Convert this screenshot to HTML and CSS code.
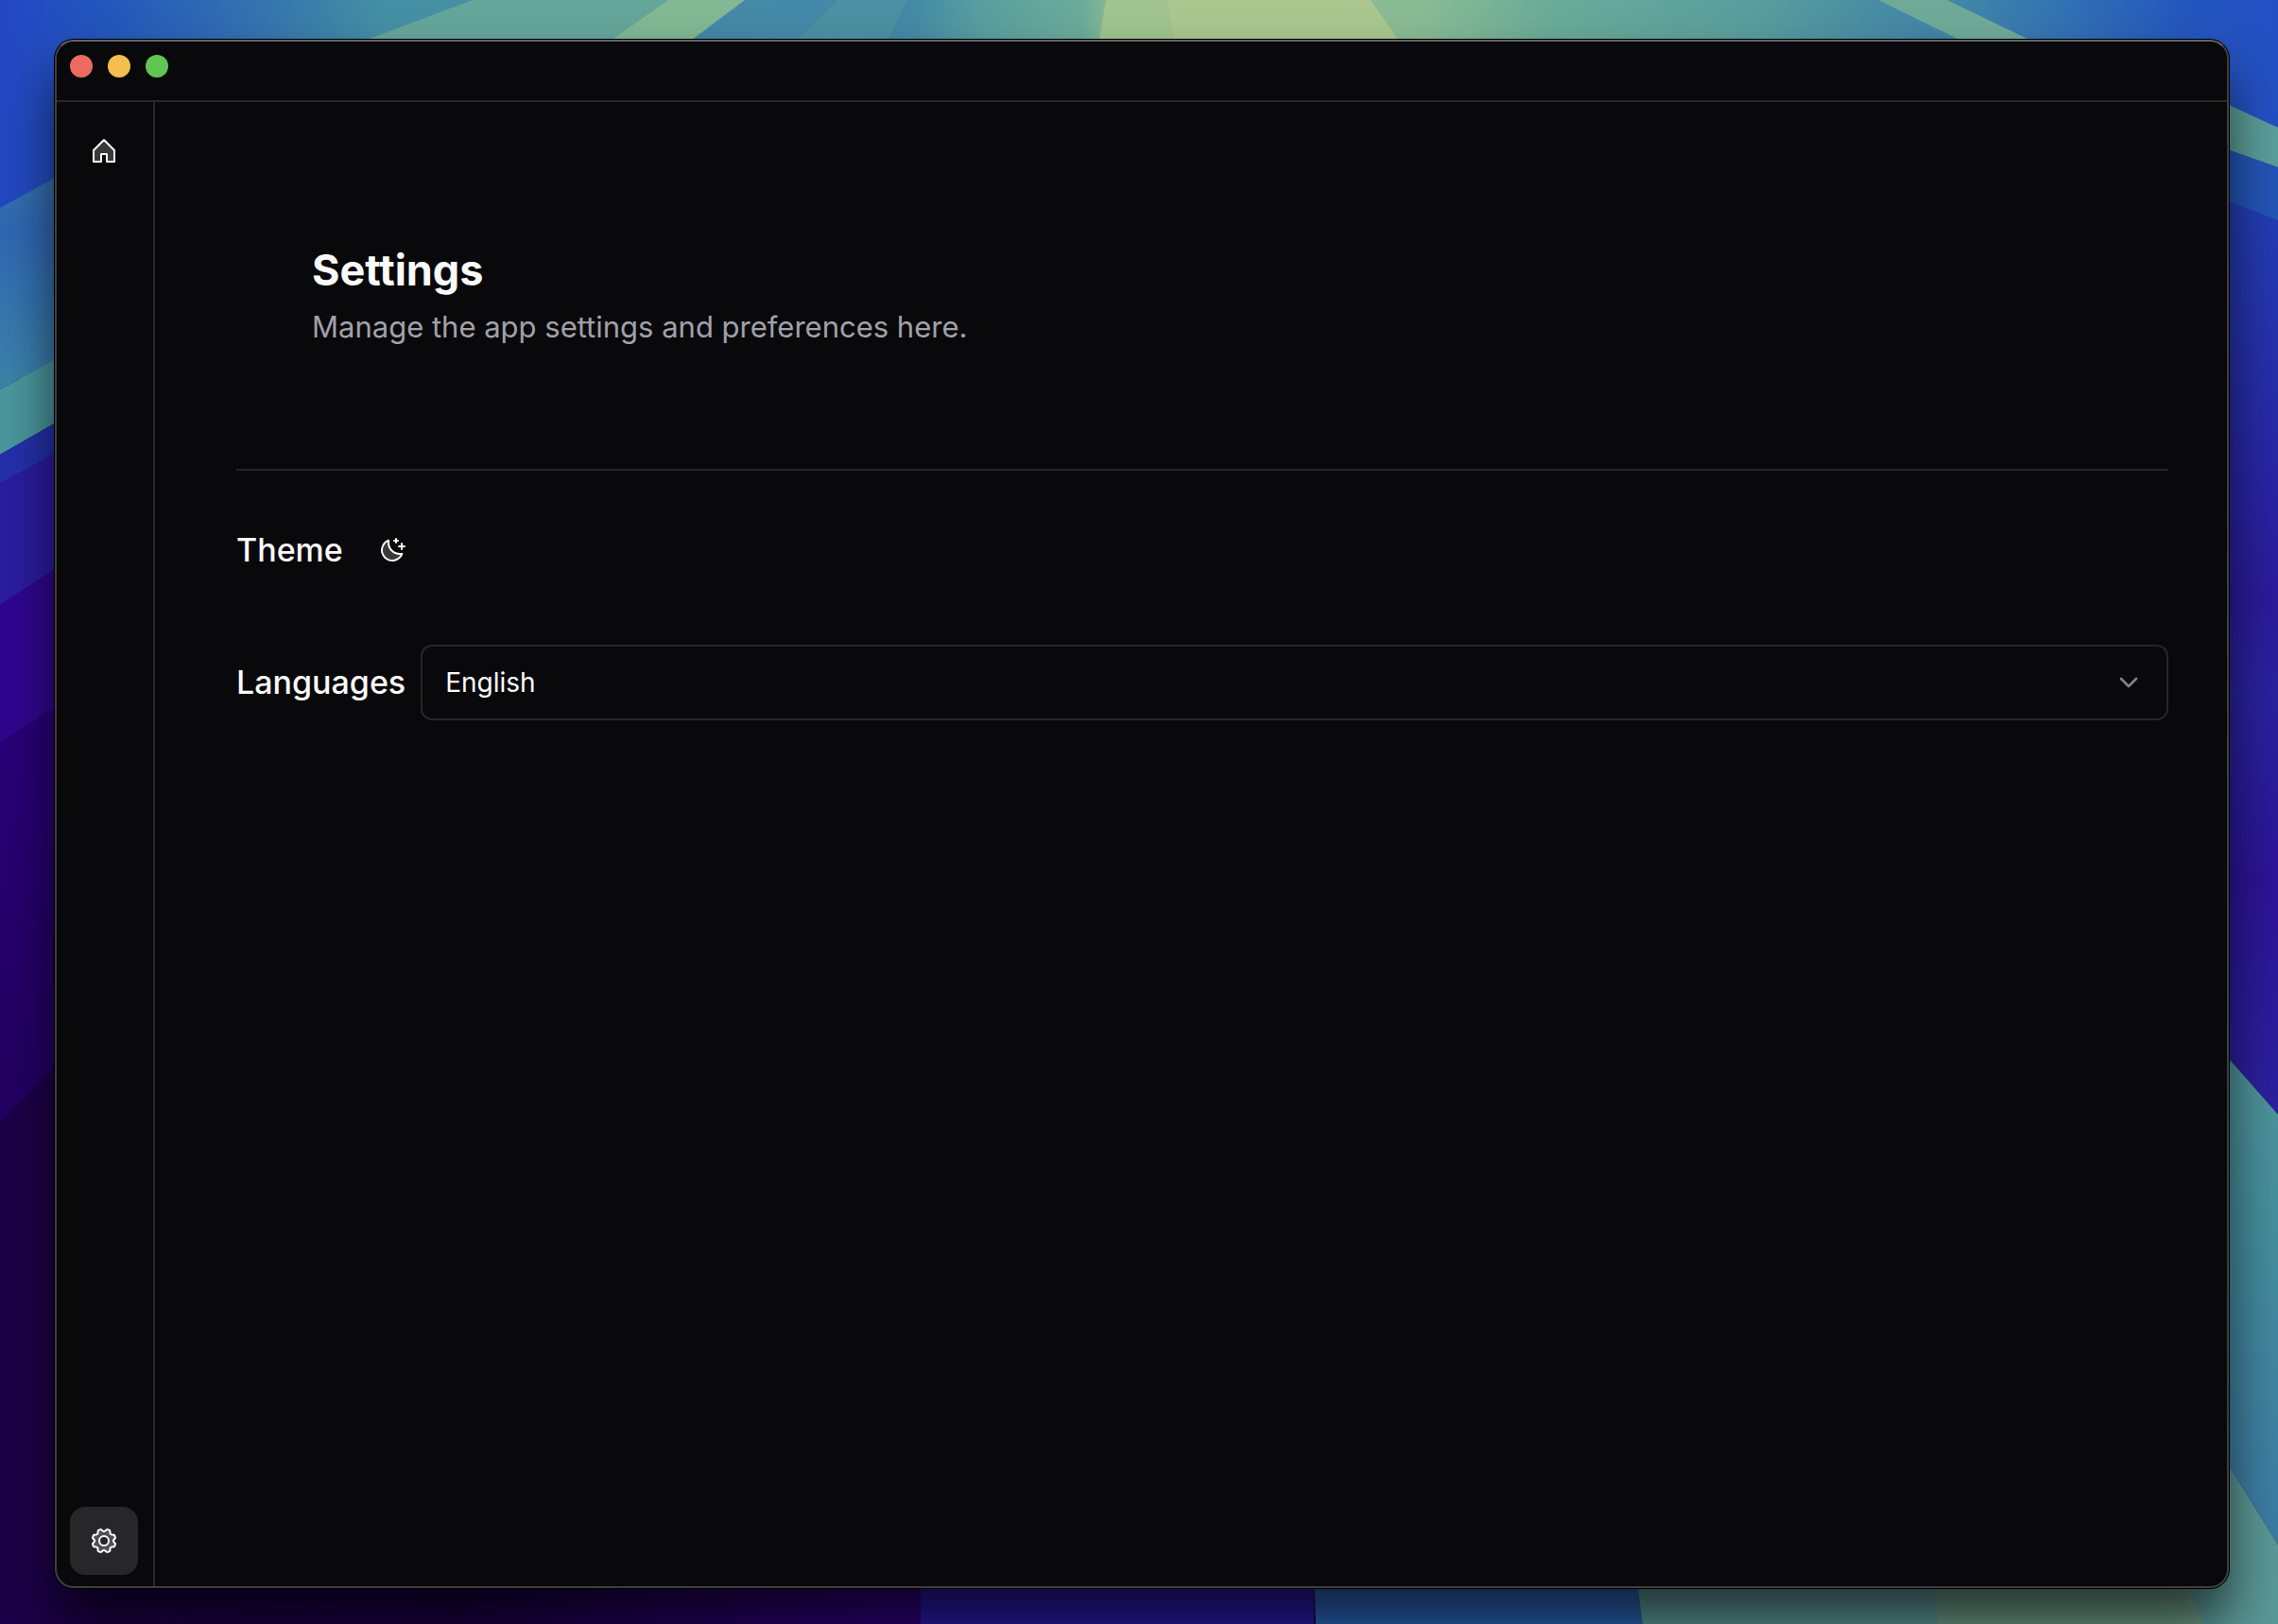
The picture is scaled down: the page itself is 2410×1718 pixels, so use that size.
FILE: index.html
```html
<!DOCTYPE html>
<html lang="en">
<head>
<meta charset="utf-8">
<meta name="viewport" content="width=device-width, initial-scale=1">
<title>Settings</title>
<link rel="stylesheet" href="styles.css">
</head>
<body>
<svg class="wallpaper" viewBox="0 0 2410 1718" preserveAspectRatio="none" aria-hidden="true">
  <defs>
    <linearGradient id="sky"><stop offset="0" stop-color="#2346c4"/><stop offset=".05" stop-color="#2458bc"/><stop offset=".12" stop-color="#3676ae"/><stop offset=".17" stop-color="#4590a4"/><stop offset=".85" stop-color="#458aa4"/><stop offset=".9" stop-color="#3474b2"/><stop offset=".96" stop-color="#2456be"/><stop offset="1" stop-color="#2450c4"/></linearGradient>
    <linearGradient id="rays" gradientUnits="userSpaceOnUse" x1="780" y1="0" x2="2085" y2="0"><stop offset="0" stop-color="#4588a8"/><stop offset=".14" stop-color="#4389a6"/><stop offset=".2" stop-color="#5a9f9f"/><stop offset=".28" stop-color="#6cab9a"/><stop offset=".3" stop-color="#84b894"/><stop offset=".35" stop-color="#96c08f"/><stop offset=".56" stop-color="#88ba94"/><stop offset=".66" stop-color="#6aab98"/><stop offset=".82" stop-color="#5a9e9d"/><stop offset="1" stop-color="#3c7fa9"/></linearGradient>
    <linearGradient id="steel" x2="0" y2="1"><stop offset="0" stop-color="#3779ad"/><stop offset=".35" stop-color="#3068b4"/><stop offset="1" stop-color="#3c84aa"/></linearGradient>
    <linearGradient id="violet" x2="0" y2="1"><stop offset="0" stop-color="#2a007c"/><stop offset="1" stop-color="#220060"/></linearGradient>
    <linearGradient id="indigo" x2="0" y2="1"><stop offset="0" stop-color="#2240b8"/><stop offset=".45" stop-color="#2c1a9c"/><stop offset=".55" stop-color="#2a229e"/><stop offset=".75" stop-color="#2c1498"/><stop offset="1" stop-color="#2c20a0"/></linearGradient>
    <linearGradient id="lagoon" x2="0" y2="1"><stop offset="0" stop-color="#52989c"/><stop offset=".4" stop-color="#478f9e"/><stop offset="1" stop-color="#3b7ca6"/></linearGradient>
    <linearGradient id="night"><stop offset="0" stop-color="#1c0048"/><stop offset=".5" stop-color="#180040"/><stop offset="1" stop-color="#2c0078"/></linearGradient>
  </defs>
  <path fill="url(#sky)" d="M0 0H2410V400H0Z"/>
  <path fill="#65a69a" d="M500 0H780L720 60H340Z"/>
  <path fill="#82b893" d="M707 0H788L720 60H622Z"/>
  <path fill="url(#rays)" d="M788 0H1987L2100 60H708Z"/>
  <path fill="#5496a2" opacity=".6" d="M887 0H960L930 60H826Z"/>
  <path fill="#a0c38f" d="M1170 0H1450L1492 60H1160Z"/>
  <path fill="#b3cb8f" opacity=".5" d="M1235 0H1450L1492 60H1245Z"/>
  <path fill="#6faa99" d="M1987 0H2060L2184 60H2110Z"/>
  <path fill="url(#steel)" d="M0 220L120 154V346L0 412Z"/>
  <path fill="#4b979e" d="M0 412L120 346V412L0 481Z"/>
  <path fill="#2430aa" d="M0 481L120 412V446L0 512Z"/>
  <path fill="#2c1ca0" d="M0 512L120 446V562L0 640Z"/>
  <path fill="#300690" d="M0 640L120 562V711L0 785Z"/>
  <path fill="url(#violet)" d="M0 785L120 711V1067L0 1187Z"/>
  <path fill="url(#night)" d="M0 1187L120 1067 974 1200V1718H0Z"/>
  <path fill="#5c9f9b" d="M2300 85L2358 111 2410 135V177L2300 138Z"/>
  <path fill="#2456b8" d="M2300 138L2410 177V233L2300 190Z"/>
  <path fill="url(#indigo)" d="M2300 190L2410 233V1179L2300 1054Z"/>
  <path fill="url(#lagoon)" d="M2300 1054L2410 1179V1634L2300 1456Z"/>
  <path fill="#5a9896" d="M1700 1456H2300L2410 1634V1718H1700Z"/>
  <path fill="#6d9a86" d="M2040 1600H2290L2330 1718H2050Z"/>
  <path fill="#2a17a0" d="M974 1400H1390V1718H974Z"/>
  <path fill="#2a62b2" d="M1388 1600H1722L1738 1718H1392Z"/>
</svg>
<div class="window">
  <header class="titlebar">
    <button class="light light-close" type="button" aria-label="Close"></button>
    <button class="light light-minimize" type="button" aria-label="Minimize"></button>
    <button class="light light-zoom" type="button" aria-label="Zoom"></button>
  </header>
  <div class="body">
    <nav class="sidebar" aria-label="Main">
      <a class="icon-button" href="#home" aria-label="Home">
        <svg class="icon" viewBox="0 0 256 256" fill="currentColor"><path opacity=".2" d="M104 216V152h48v64h64V120L128 32 40 120v96Z"/><path fill="none" stroke="currentColor" stroke-width="16" stroke-linejoin="round" d="M104 216V152h48v64h64V120L128 32 40 120v96Z"/></svg>
      </a>
      <a class="icon-button icon-button-active" href="#settings" aria-label="Settings" aria-current="page">
        <svg class="icon" viewBox="0 0 256 256" fill="currentColor"><path opacity=".2" fill-rule="evenodd" d="M207.86 123.18l16.78-21a99.14 99.14 0 0 0-10.07-24.29l-26.7-3a81 81 0 0 0-6.81-6.81l-3-26.71a99.43 99.43 0 0 0-24.3-10l-21 16.77a81.59 81.59 0 0 0-9.64 0l-21-16.78a99.14 99.14 0 0 0-24.21 10.07l-3 26.7a81 81 0 0 0-6.81 6.81l-26.71 3a99.43 99.43 0 0 0-10 24.3l16.77 21a81.59 81.59 0 0 0 0 9.64l-16.78 21a99.14 99.14 0 0 0 10.07 24.29l26.7 3a81 81 0 0 0 6.81 6.81l3 26.71a99.43 99.43 0 0 0 24.3 10l21-16.77a81.59 81.59 0 0 0 9.64 0l21 16.78a99.14 99.14 0 0 0 24.29-10.07l3-26.7a81 81 0 0 0 6.81-6.81l26.71-3a99.43 99.43 0 0 0 10-24.3l-16.77-21a81.59 81.59 0 0 0-.08-9.64ZM128 168a40 40 0 1 1 40-40 40 40 0 0 1-40 40Z"/><path fill-rule="evenodd" d="M128,80a48,48,0,1,0,48,48A48.05,48.05,0,0,0,128,80Zm0,80a32,32,0,1,1,32-32A32,32,0,0,1,128,160Zm88-29.84q.06-2.16,0-4.32l14.92-18.64a8,8,0,0,0,1.48-7.06,107.21,107.21,0,0,0-10.88-26.25,8,8,0,0,0-6-3.93l-23.72-2.64q-1.48-1.56-3-3L186,40.54a8,8,0,0,0-3.94-6,107.71,107.71,0,0,0-26.25-10.87,8,8,0,0,0-7.06,1.49L130.16,40Q128,40,125.84,40L107.2,25.11a8,8,0,0,0-7.06-1.48A107.6,107.6,0,0,0,73.89,34.51a8,8,0,0,0-3.93,6L67.32,64.27q-1.56,1.49-3,3L40.54,70a8,8,0,0,0-6,3.94,107.71,107.71,0,0,0-10.87,26.25,8,8,0,0,0,1.49,7.06L40,125.84Q40,128,40,130.16L25.11,148.8a8,8,0,0,0-1.48,7.06,107.21,107.21,0,0,0,10.88,26.25,8,8,0,0,0,6,3.93l23.72,2.64q1.49,1.56,3,3L70,215.46a8,8,0,0,0,3.94,6,107.71,107.71,0,0,0,26.25,10.87,8,8,0,0,0,7.06-1.49L125.84,216q2.16.06,4.32,0l18.64,14.92a8,8,0,0,0,7.06,1.48,107.21,107.21,0,0,0,26.25-10.88,8,8,0,0,0,3.93-6l2.64-23.72q1.56-1.48,3-3L215.46,186a8,8,0,0,0,6-3.94,107.71,107.71,0,0,0,10.87-26.25,8,8,0,0,0-1.49-7.06Zm-16.1-6.5a73.93,73.93,0,0,1,0,8.68,8,8,0,0,0,1.74,5.48l14.19,17.73a91.57,91.57,0,0,1-6.23,15L187,173.11a8,8,0,0,0-5.1,2.64,74.11,74.11,0,0,1-6.14,6.14,8,8,0,0,0-2.64,5.1l-2.51,22.58a91.32,91.32,0,0,1-15,6.23l-17.74-14.19a8,8,0,0,0-5-1.75h-.48a73.93,73.93,0,0,1-8.68,0,8,8,0,0,0-5.48,1.74L100.45,215.8a91.57,91.57,0,0,1-15-6.23L82.89,187a8,8,0,0,0-2.64-5.1,74.11,74.11,0,0,1-6.14-6.14,8,8,0,0,0-5.1-2.64L46.43,170.6a91.32,91.32,0,0,1-6.23-15l14.19-17.74a8,8,0,0,0,1.74-5.48,73.93,73.93,0,0,1,0-8.68,8,8,0,0,0-1.74-5.48L40.2,100.45a91.57,91.57,0,0,1,6.23-15L69,82.89a8,8,0,0,0,5.1-2.64,74.11,74.11,0,0,1,6.14-6.14A8,8,0,0,0,82.89,69L85.4,46.43a91.32,91.32,0,0,1,15-6.23l17.74,14.19a8,8,0,0,0,5.48,1.74,73.93,73.93,0,0,1,8.68,0,8,8,0,0,0,5.48-1.74L155.55,40.2a91.57,91.57,0,0,1,15,6.23L173.11,69a8,8,0,0,0,2.64,5.1,74.11,74.11,0,0,1,6.14,6.14,8,8,0,0,0,5.1,2.64l22.58,2.51a91.32,91.32,0,0,1,6.23,15l-14.19,17.74A8,8,0,0,0,199.87,123.66Z"/></svg>
      </a>
    </nav>
    <main class="content">
      <section class="intro">
        <h1 class="title">Settings</h1>
        <p class="subtitle">Manage the app settings and preferences here.</p>
      </section>
      <hr class="divider">
      <div class="rows">
        <div class="row">
          <h2 class="label" id="theme-label">Theme</h2>
          <button class="icon-button" type="button" aria-labelledby="theme-label">
            <svg class="icon" viewBox="0 0 256 256" fill="currentColor"><path opacity=".2" d="M210.69 158.18A96 96 0 0 1 97.82 45.31 88 88 0 1 0 210.69 158.18Z"/><path d="M240,96a8,8,0,0,1-8,8H216v16a8,8,0,0,1-16,0V104H184a8,8,0,0,1,0-16h16V72a8,8,0,0,1,16,0V88h16A8,8,0,0,1,240,96ZM144,56h8v8a8,8,0,0,0,16,0V56h8a8,8,0,0,0,0-16h-8V32a8,8,0,0,0-16,0v8h-8a8,8,0,0,0,0,16Zm72.77,97a8,8,0,0,1,1.43,8A96,96,0,1,1,95.07,37.8a8,8,0,0,1,10.6,9.06A88.07,88.07,0,0,0,209.14,150.35,8,8,0,0,1,216.77,153Zm-19.39,14.88c-1.79.09-3.59.14-5.38.14A104.11,104.11,0,0,1,88,64c0-1.79,0-3.59.14-5.38A80,80,0,1,0,197.38,167.83Z"/></svg>
          </button>
        </div>
        <div class="row">
          <label class="label" for="language">Languages</label>
          <div class="select">
            <select class="select-input" id="language"><option>English</option></select>
            <svg class="select-arrow" viewBox="0 0 24 24" aria-hidden="true"><path d="m6 9 6 6 6-6"/></svg>
          </div>
        </div>
      </div>
    </main>
  </div>
</div>
</body>
</html>
```
FILE: styles.css
```css
* {
  box-sizing: border-box;
}

body {
  display: flex;
  min-height: 100vh;
  margin: 0;
  padding: 42px 52px 38px 58px;
  background: #1c0048;
  color: #fafafa;
  font-family: Inter, "Liberation Sans", sans-serif;
}

h1, h2, p {
  margin: 0;
}

.wallpaper {
  position: absolute;
  inset: 0;
  z-index: -1;
  width: 100%;
  height: 100%;
}

.window {
  display: flex;
  flex: 1;
  flex-direction: column;
  min-width: 0;
  overflow: hidden;
  border: 2px solid #3f3f41;
  border-top-color: #626366;
  border-radius: 20px;
  background: #09090b;
  box-shadow: 0 0 0 1px #000, 0 36px 56px rgba(0, 0, 0, .65);
}

.titlebar {
  display: flex;
  gap: 16px;
  height: 64px;
  padding: 14px;
  border-bottom: 2px solid #27272a;
}

.light {
  width: 24px;
  height: 24px;
  padding: 0;
  border: 0;
  border-radius: 50%;
}

.light-close {
  background: #ed6a5e;
}

.light-minimize {
  background: #f5bf4f;
}

.light-zoom {
  background: #61c554;
}

.body {
  display: flex;
  flex: 1;
}

.sidebar {
  display: flex;
  flex-direction: column;
  justify-content: space-between;
  padding: 16px 16px 12px 14px;
  border-right: 2px solid #27272a;
}

.icon-button {
  display: grid;
  place-items: center;
  width: 72px;
  height: 72px;
  padding: 0;
  border: 0;
  border-radius: 16px;
  background: none;
  color: #fafafa;
}

.icon-button-active {
  background: #27272a;
}

.icon {
  width: 32px;
  height: 32px;
}

.content {
  flex: 1;
  min-width: 0;
  padding: 70px 62px 70px 86px;
}

.intro {
  display: grid;
  gap: 8px;
  padding: 80px;
}

.title {
  font-size: 45px;
  font-weight: 700;
  line-height: 56px;
}

.subtitle {
  color: #a1a1aa;
  font-size: 31px;
  line-height: 48px;
}

.divider {
  height: 2px;
  margin: 46px 0 48px;
  border: 0;
  background: #27272a;
}

.rows {
  display: grid;
  gap: 64px;
}

.row {
  display: flex;
  align-items: center;
  gap: 16px;
}

.label {
  font-size: 34px;
  font-weight: 500;
  line-height: 56px;
}

.select {
  display: grid;
  flex: 1;
  align-items: center;
}

.select-input {
  grid-area: 1 / 1;
  width: 100%;
  height: 80px;
  padding: 0 24px;
  border: 2px solid #27272a;
  border-radius: 12px;
  appearance: none;
  background: transparent;
  color: #fafafa;
  font: 400 28px/40px Inter, "Liberation Sans", sans-serif;
}

.select-arrow {
  grid-area: 1 / 1;
  justify-self: end;
  width: 32px;
  height: 32px;
  margin-right: 26px;
  fill: none;
  stroke: #828284;
  stroke-width: 2;
  stroke-linecap: round;
  stroke-linejoin: round;
  pointer-events: none;
}
```
